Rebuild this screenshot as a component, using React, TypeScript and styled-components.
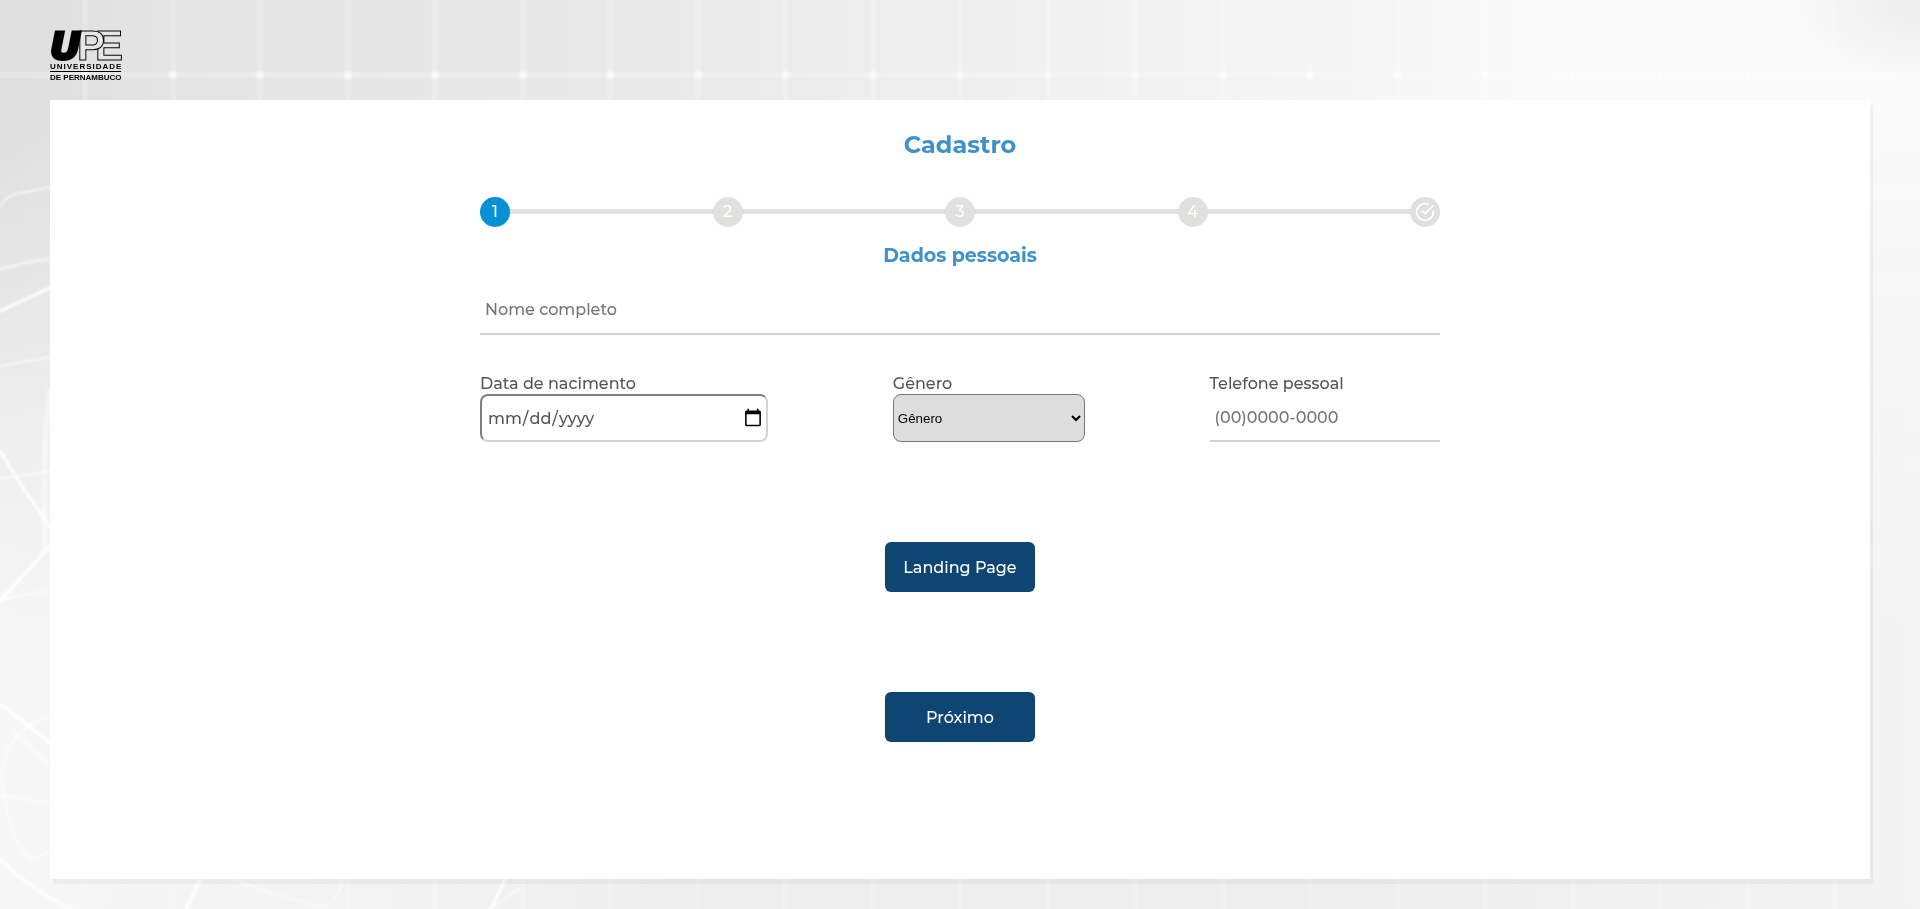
import React from 'react';
import styled, { createGlobalStyle } from 'styled-components';
import { FiCheckCircle } from 'react-icons/fi';

const GlobalStyle = createGlobalStyle`
  *, *::before, *::after { box-sizing: border-box; }
  body {
    margin: 0;
    background: #f0f0f0;
    color: #555;
    font-family: Montserrat, Inter, sans-serif;
    font-size: 16px;
    font-weight: 500;
  }
`;

const Page = styled.div`
  display: flex;
  flex-direction: column;
  min-height: 100vh;
`;

const Backdrop = styled.svg`
  position: fixed;
  inset: 0;
  z-index: -1;
  width: 100%;
  height: 100%;
`;

const Header = styled.header`
  display: flex;
  padding: 30px 50px 20px;
`;

const Logo = styled.svg`
  display: block;
  width: 72px;
  height: 50px;
  overflow: visible;
  font-family: "Liberation Sans", Arial, sans-serif;
  font-weight: 700;
`;

const Card = styled.main`
  display: flex;
  flex: 1;
  flex-direction: column;
  align-items: center;
  margin: 0 50px 30px;
  padding: 30px 20px;
  background: #fff;
  box-shadow: 3px 5px 0 rgba(0, 0, 0, 0.04);
`;

const Title = styled.h1`
  margin: 0 0 37px;
  color: #4191c9;
  font-size: 24px;
  font-weight: 700;
  line-height: 30px;
`;

const Subtitle = styled.h2`
  margin: 17px 0;
  color: #4191c9;
  font-size: 19px;
  font-weight: 700;
  line-height: 24px;
  text-align: center;
`;

const Form = styled.form`
  display: flex;
  flex-direction: column;
  width: 100%;
  max-width: 960px;
`;

const Steps = styled.ol`
  display: flex;
  justify-content: space-between;
  margin: 0;
  padding: 0;
  list-style: none;
  background: linear-gradient(#e0e0e0, #e0e0e0) center 12px / 100% 5px no-repeat;
`;

const Step = styled.li<{ $active?: boolean }>`
  display: flex;
  align-items: center;
  justify-content: center;
  width: 30px;
  height: 30px;
  border-radius: 50%;
  background: ${({ $active }) => ($active ? '#0690d5' : '#e0e0de')};
  color: #fff;
  line-height: 30px;
`;

const LineInput = styled.input<{ $tall?: boolean }>`
  width: 100%;
  height: ${({ $tall }) => ($tall ? 50 : 48)}px;
  padding: 0 5px;
  border: 0;
  border-bottom: 2px solid #d3d3d3;
  background: transparent;
  color: #555;
  font: inherit;

  &::placeholder { color: #757575; }
`;

const FieldRow = styled.div`
  display: flex;
  flex-wrap: wrap;
  justify-content: space-between;
  margin: 39px 0 100px;
`;

const Field = styled.div<{ $share: number }>`
  display: flex;
  flex-direction: column;
  width: ${({ $share }) => $share}%;
`;

const Label = styled.label`
  line-height: 20px;
  white-space: nowrap;
`;

const DateInput = styled.input`
  width: 100%;
  height: 48px;
  padding: 0 3px 0 5px;
  border: 2px solid;
  border-color: #808080 #d3d3d3 #d3d3d3 #808080;
  border-radius: 8px;
  background: #fff;
  color: #555;
  font: inherit;

  &::-webkit-calendar-picker-indicator {
    width: 20px;
    height: 20px;
    padding: 0;
  }
`;

const Select = styled.select`
  width: 100%;
  height: 48px;
  border: 1px solid #767676;
  border-radius: 8px;
  background: #ddd;
  color: #000;
`;

const Actions = styled.div`
  display: flex;
  flex-direction: column;
  align-items: center;
  gap: 100px;
`;

const Button = styled.button`
  width: 150px;
  height: 50px;
  padding: 0;
  border: 0;
  border-radius: 6px;
  background: #0f4572;
  color: #fff;
  font: inherit;
  cursor: pointer;
`;

const columns = Array.from({ length: 21 }, (_, i) => 85 + Math.round(i * 87.5));

function Background() {
  return (
    <Backdrop viewBox="0 0 1920 909" preserveAspectRatio="none" aria-hidden="true">
      <defs>
        <linearGradient id="top">
          <stop offset="0" stopColor="#dedede" />
          <stop offset="0.08" stopColor="#e4e4e4" />
          <stop offset="0.33" stopColor="#e9e9e9" />
          <stop offset="0.68" stopColor="#f5f5f5" />
          <stop offset="0.82" stopColor="#fafafa" />
          <stop offset="1" stopColor="#fafafa" />
        </linearGradient>
        <linearGradient id="bottom">
          <stop offset="0" stopColor="#f7f7f7" />
          <stop offset="0.2" stopColor="#f3f3f3" />
          <stop offset="0.36" stopColor="#eeeeee" />
          <stop offset="0.68" stopColor="#eeeeee" />
          <stop offset="1" stopColor="#f3f3f3" />
        </linearGradient>
        <linearGradient id="fade" x2="0" y2="1">
          <stop offset="0.1" stopColor="#000" />
          <stop offset="0.7" stopColor="#fff" />
        </linearGradient>
        <mask id="lower">
          <rect width="1920" height="909" fill="url(#fade)" />
        </mask>
        <radialGradient id="glow">
          <stop offset="0" stopColor="#fff" stopOpacity="0.85" />
          <stop offset="1" stopColor="#fff" stopOpacity="0" />
        </radialGradient>
        <radialGradient id="corner">
          <stop offset="0" stopColor="#ececec" />
          <stop offset="1" stopColor="#ececec" stopOpacity="0" />
        </radialGradient>
        <filter id="soft" x="-20%" y="-20%" width="140%" height="140%">
          <feGaussianBlur stdDeviation="1" />
        </filter>
      </defs>
      <rect width="1920" height="909" fill="url(#top)" />
      <rect width="1920" height="909" fill="url(#bottom)" mask="url(#lower)" />
      <ellipse cx="1920" cy="0" rx="130" ry="80" fill="url(#corner)" />
      {columns.map((x) => (
        <g key={x}>
          <rect x={x - 3} width="6" height="909" fill="#fff" opacity="0.16" />
          <rect x={x - 1} width="2" height="909" fill="#fff" opacity="0.08" />
          <circle cx={x} cy="75" r="6" fill="url(#glow)" />
        </g>
      ))}
      <rect y="72" width="1920" height="6" fill="#fff" opacity="0.2" />
      <g fill="none" stroke="#fff" strokeLinecap="round" filter="url(#soft)">
        <g strokeWidth="2" opacity="0.65">
          <path d="M0 206Q8 195 16 194L50 187M0 269L25 263L50 259M0 366L50 357M0 479L50 471M0 600L50 590" />
          <path d="M50 715Q0 735 2 780Q10 850 35 860L50 850M12 730L50 766M0 795L50 803" />
          <path d="M230 878Q280 898 325 907Q338 900 343 878M490 909L520 888" />
        </g>
        <g strokeWidth="3">
          <path d="M0 311L50 288M0 451Q25 492 50 527M0 601L50 546M0 704L50 743M0 860Q38 895 78 912M201 878L185 911M506 878L490 911" />
        </g>
        <path d="M50 390Q42 450 45 550" strokeWidth="5" opacity="0.5" />
      </g>
    </Backdrop>
  );
}

function UpeLogo() {
  return (
    <Logo viewBox="0 0 72 50" role="img" aria-label="UPE Universidade de Pernambuco">
      <g fontSize="42" fill="#e6e6e6" stroke="#000">
        <text x="45" y="30">E</text>
        <text x="27" y="30">P</text>
      </g>
      <text
        x="0"
        y="29"
        fontFamily="DejaVu Sans"
        fontSize="38"
        fontStyle="italic"
        stroke="#000"
        strokeWidth="3"
      >
        U
      </text>
      <text x="0" y="39" fontSize="8" letterSpacing="1">UNIVERSIDADE</text>
      <path d="M0 41.5H71" stroke="#000" />
      <text x="0" y="50" fontSize="8">DE PERNAMBUCO</text>
    </Logo>
  );
}

export default function App() {
  return (
    <>
      <GlobalStyle />
      <Background />
      <Page>
        <Header>
          <UpeLogo />
        </Header>
        <Card>
          <Title>Cadastro</Title>
          <Form onSubmit={(event) => event.preventDefault()}>
            <Steps>
              <Step $active aria-current="step">1</Step>
              <Step>2</Step>
              <Step>3</Step>
              <Step>4</Step>
              <Step aria-label="Concluído"><FiCheckCircle size={20} /></Step>
            </Steps>
            <Subtitle>Dados pessoais</Subtitle>
            <LineInput $tall type="text" name="nome" aria-label="Nome completo" placeholder="Nome completo" />
            <FieldRow>
              <Field $share={30}>
                <Label htmlFor="nascimento">Data de nacimento</Label>
                <DateInput id="nascimento" type="date" />
              </Field>
              <Field $share={20}>
                <Label htmlFor="genero">Gênero</Label>
                <Select id="genero" defaultValue="">
                  <option value="">Gênero</option>
                  <option value="feminino">Feminino</option>
                  <option value="masculino">Masculino</option>
                  <option value="outro">Outro</option>
                </Select>
              </Field>
              <Field $share={24}>
                <Label htmlFor="telefone">Telefone pessoal</Label>
                <LineInput id="telefone" type="tel" placeholder="(00)0000-0000" />
              </Field>
            </FieldRow>
            <Actions>
              <Button type="button">Landing Page</Button>
              <Button type="submit">Próximo</Button>
            </Actions>
          </Form>
        </Card>
      </Page>
    </>
  );
}
